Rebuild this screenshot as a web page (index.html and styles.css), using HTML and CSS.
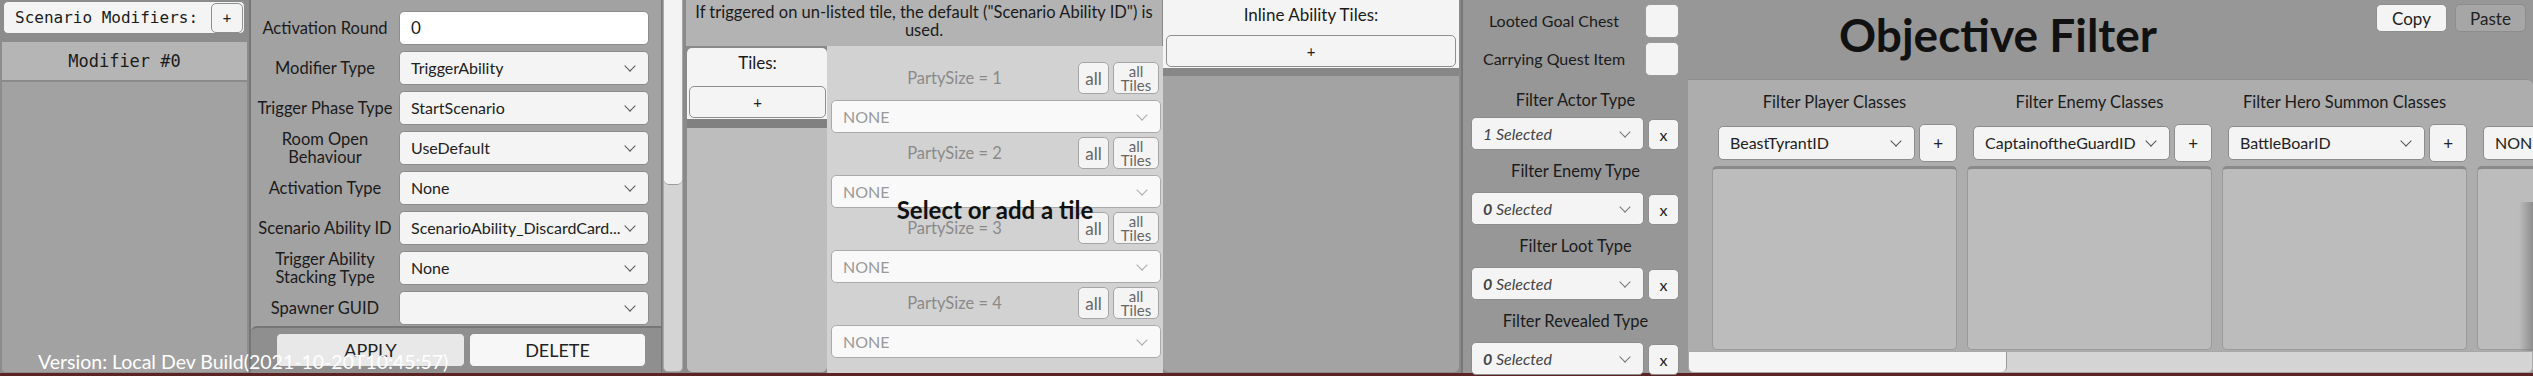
FILE: index.html
```html
<!DOCTYPE html>
<html lang="en">
<head>
  <meta charset="UTF-8">
  <title>Scenario Modifier Editor</title>
  <link rel="stylesheet" href="styles.css">
</head>
<body>

  <div class="editor">

    <aside class="modifiers">
      <div class="mod-head">
        <span>Scenario Modifiers:</span>
        <button class="btn mod-add">+</button>
      </div>
      <div class="mod-item">Modifier #0</div>
      <div class="mod-list"></div>
    </aside>

    <section class="form-panel">
      <div class="form-rows">
        <span class="form-label">Activation Round</span>
        <div class="field-input">0</div>

        <span class="form-label">Modifier Type</span>
        <div class="select">TriggerAbility</div>

        <span class="form-label">Trigger Phase Type</span>
        <div class="select">StartScenario</div>

        <span class="form-label">Room Open<br>Behaviour</span>
        <div class="select">UseDefault</div>

        <span class="form-label">Activation Type</span>
        <div class="select">None</div>

        <span class="form-label">Scenario Ability ID</span>
        <div class="select">ScenarioAbility_DiscardCard...</div>

        <span class="form-label">Trigger Ability<br>Stacking Type</span>
        <div class="select">None</div>

        <span class="form-label">Spawner GUID</span>
        <div class="select"></div>
      </div>
      <div class="form-actions">
        <button class="btn btn-apply">APPLY</button>
        <button class="btn btn-delete">DELETE</button>
      </div>
    </section>

    <div class="vscroll">
      <div class="vscroll-track">
        <div class="vscroll-thumb"></div>
      </div>
    </div>

    <section class="tile-panel">
      <p class="tile-note">If triggered on un-listed tile, the default ("Scenario Ability ID") is<br>used.</p>
      <div class="tile-body">
        <div class="tile-list">
          <div class="tile-list-head">
            <div class="tile-list-title">Tiles:</div>
            <button class="btn tile-add">+</button>
          </div>
          <div class="tile-list-items"></div>
        </div>

        <div class="tile-sizes">
          <div class="size-group">
            <div class="size-head">
              <span class="size-label">PartySize = 1</span>
              <button class="btn btn-all">all</button>
              <button class="btn btn-all-tiles">all<br>Tiles</button>
            </div>
            <div class="select select-none">NONE</div>
          </div>
          <div class="size-group">
            <div class="size-head">
              <span class="size-label">PartySize = 2</span>
              <button class="btn btn-all">all</button>
              <button class="btn btn-all-tiles">all<br>Tiles</button>
            </div>
            <div class="select select-none">NONE</div>
          </div>
          <div class="size-group">
            <div class="size-head">
              <span class="size-label">PartySize = 3</span>
              <button class="btn btn-all">all</button>
              <button class="btn btn-all-tiles">all<br>Tiles</button>
            </div>
            <div class="select select-none">NONE</div>
          </div>
          <div class="size-group">
            <div class="size-head">
              <span class="size-label">PartySize = 4</span>
              <button class="btn btn-all">all</button>
              <button class="btn btn-all-tiles">all<br>Tiles</button>
            </div>
            <div class="select select-none">NONE</div>
          </div>

          <div class="tile-empty">Select or add a tile</div>
        </div>
      </div>
    </section>

    <section class="inline-panel">
      <div class="inline-head">
        <div class="inline-title">Inline Ability Tiles:</div>
        <button class="btn inline-add">+</button>
      </div>
      <div class="inline-list"></div>
    </section>

    <section class="filter-panel">
      <div class="check-row">
        <span class="check-label">Looted Goal Chest</span>
        <span class="checkbox"></span>
      </div>
      <div class="check-row">
        <span class="check-label">Carrying Quest Item</span>
        <span class="checkbox"></span>
      </div>

      <div class="filter-label">Filter Actor Type</div>
      <div class="filter-row">
        <div class="select select-multi">1 Selected</div>
        <button class="btn btn-clear">x</button>
      </div>

      <div class="filter-label">Filter Enemy Type</div>
      <div class="filter-row">
        <div class="select select-multi"><b>0</b> Selected</div>
        <button class="btn btn-clear">x</button>
      </div>

      <div class="filter-label">Filter Loot Type</div>
      <div class="filter-row">
        <div class="select select-multi"><b>0</b> Selected</div>
        <button class="btn btn-clear">x</button>
      </div>

      <div class="filter-label">Filter Revealed Type</div>
      <div class="filter-row">
        <div class="select select-multi"><b>0</b> Selected</div>
        <button class="btn btn-clear">x</button>
      </div>
    </section>

    <section class="objective">
      <div class="obj-head">
        <h1 class="obj-title">Objective Filter</h1>
        <div class="obj-actions">
          <button class="btn btn-copy">Copy</button>
          <button class="btn btn-paste">Paste</button>
        </div>
      </div>

      <div class="obj-body">
        <div class="class-col">
          <div class="class-title">Filter Player Classes</div>
          <div class="class-pick">
            <div class="select">BeastTyrantID</div>
            <button class="btn btn-plus">+</button>
          </div>
          <div class="class-list"></div>
        </div>
        <div class="class-col">
          <div class="class-title">Filter Enemy Classes</div>
          <div class="class-pick">
            <div class="select">CaptainoftheGuardID</div>
            <button class="btn btn-plus">+</button>
          </div>
          <div class="class-list"></div>
        </div>
        <div class="class-col">
          <div class="class-title">Filter Hero Summon Classes</div>
          <div class="class-pick">
            <div class="select">BattleBoarID</div>
            <button class="btn btn-plus">+</button>
          </div>
          <div class="class-list"></div>
        </div>
        <div class="class-col">
          <div class="class-title">&nbsp;</div>
          <div class="class-pick">
            <div class="select">NONE</div>
            <button class="btn btn-plus">+</button>
          </div>
          <div class="class-list"></div>
        </div>
      </div>

      <div class="hscroll">
        <div class="hscroll-thumb"></div>
      </div>
    </section>

    <div class="version">Version: Local Dev Build(2021-10-20T10:45:57)</div>
  </div>

</body>
</html>
```

FILE: styles.css
```css
* {
  box-sizing: border-box;
}
body {
  margin: 0;
  width: 2533px;
  height: 376px;
  overflow: hidden;
  background: #5a2424;
  font-family: Lato, "Open Sans", sans-serif;
  font-size: 16px;
  color: #1b1b1b;
}
.editor {
  position: relative;
  display: flex;
  height: 373px;
  background: #8a8a8a;
}
.btn {
  padding: 0;
  font-family: inherit;
  font-size: 16px;
  color: #222;
  background: #f4f4f4;
  border: 1px solid #8e8e8e;
  border-radius: 5px;
  cursor: pointer;
}

/* dropdowns */
.select {
  position: relative;
  height: 34px;
  padding: 0 30px 0 11px;
  line-height: 32px;
  white-space: nowrap;
  overflow: hidden;
  color: #222;
  background: #f4f4f4;
  border: 1px solid #8c8c8c;
  border-radius: 5px;
}
.select::after {
  content: "";
  position: absolute;
  right: 14px;
  top: 10px;
  width: 7px;
  height: 7px;
  border-right: 1.5px solid #555;
  border-bottom: 1.5px solid #555;
  transform: rotate(45deg);
}

/* scenario modifiers list */
.modifiers {
  width: 251px;
  display: flex;
  flex-direction: column;
  background: #8c8c8c;
  border-right: 2px solid #777;
  font-family: "DejaVu Sans Mono", monospace;
}
.mod-head {
  height: 33px;
  margin: 1px 4px 0 3px;
  padding: 0 1px 0 11px;
  display: flex;
  align-items: center;
  justify-content: space-between;
  font-size: 16px;
  background: #f4f4f4;
  border: 1px solid #8a8a8a;
  border-radius: 5px;
}
.mod-add {
  width: 32px;
  height: 30px;
  font-family: inherit;
  font-size: 14px;
}
.mod-item {
  height: 40px;
  margin: 8px 2px 0;
  line-height: 38px;
  text-align: center;
  font-size: 17px;
  background: #b5b5b5;
  border-bottom: 2px solid #8a8a8a;
}
.mod-list {
  flex: 1;
  margin: 0 2px 1px;
  background: #a2a2a2;
  border-radius: 0 0 4px 4px;
}

/* modifier form */
.form-panel {
  width: 410px;
  display: flex;
  flex-direction: column;
  background: #a2a2a2;
}
.form-rows {
  flex: 1;
  display: grid;
  grid-template-columns: 148px 250px;
  grid-auto-rows: 34px;
  row-gap: 6px;
  align-items: center;
  padding-top: 11px;
}
.form-label {
  text-align: center;
  line-height: 18px;
  font-size: 16.5px;
}
.field-input {
  height: 34px;
  padding-left: 11px;
  line-height: 32px;
  font-size: 17px;
  background: #fff;
  border: 1px solid #8c8c8c;
  border-radius: 5px;
}
.form-actions {
  height: 47px;
  display: flex;
  gap: 4px;
  padding: 5px 15px 0 25px;
  background: #8f8f8f;
  border-top: 2px solid #767676;
  border-radius: 6px 0 0 0;
}
.btn-apply,
.btn-delete {
  height: 34px;
  font-size: 18px;
}
.btn-apply {
  width: 189px;
  background: #e8e8e8;
}
.btn-delete {
  width: 177px;
  background: #f7f7f7;
}

.vscroll {
  width: 25px;
  padding: 0 3px 1px 1px;
  border-left: 1px solid #777;
}
.vscroll-track {
  height: 100%;
  background: #d4d4d4;
  border: 1px solid #a8a8a8;
  border-top: none;
  border-radius: 0 0 5px 5px;
}
.vscroll-thumb {
  height: 185px;
  background: #f3f3f3;
  border-bottom: 1px solid #9a9a9a;
  border-radius: 0 0 5px 5px;
}

/* tile overrides */
.tile-panel {
  width: 477px;
  display: flex;
  flex-direction: column;
}
.tile-note {
  height: 46px;
  margin: 0 1px 0 0;
  padding-top: 3px;
  text-align: center;
  line-height: 18px;
  font-size: 16.5px;
  background: #b3b3b3;
}
.tile-body {
  flex: 1;
  display: flex;
}
.tile-list {
  width: 140px;
  display: flex;
  flex-direction: column;
  margin: 2px 0 1px 1px;
}
.tile-list-head {
  padding: 0 1px 1px 2px;
  background: #f4f4f4;
  border-radius: 5px 5px 0 0;
}
.tile-list-title {
  height: 38px;
  line-height: 30px;
  text-align: center;
  font-size: 17px;
}
.tile-add,
.inline-add {
  display: block;
  width: 100%;
  height: 32px;
  font-size: 15px;
}
.tile-list-items {
  flex: 1;
  background: #bdbdbd;
  border-top: 9px solid #808080;
  border-radius: 0 0 5px 5px;
}
.tile-sizes {
  position: relative;
  flex: 1;
  padding: 16px 2px 0 4px;
  background: #d2d2d2;
}
.size-group {
  margin-bottom: 4px;
}
.size-head {
  display: flex;
  align-items: center;
  height: 32px;
  margin-bottom: 6px;
  padding-right: 2px;
}
.size-label {
  flex: 1;
  text-align: center;
  font-size: 16.5px;
  color: #8a8a8a;
}
.btn-all,
.btn-all-tiles {
  height: 32px;
  color: #666;
  border-color: #a5a5a5;
}
.btn-all {
  width: 31px;
  font-size: 17px;
}
.btn-all-tiles {
  width: 46px;
  margin-left: 4px;
  font-size: 15px;
  line-height: 14px;
}
.select-none {
  height: 33px;
  color: #9a9a9a;
  background: #f9f9f9;
  border-color: #ababab;
}
.select-none::after {
  border-color: #aaa;
}
.tile-empty {
  position: absolute;
  inset: 0;
  display: flex;
  align-items: center;
  justify-content: center;
  font-size: 24px;
  font-weight: bold;
  color: #111;
  pointer-events: none;
}

/* inline ability tiles */
.inline-panel {
  width: 298px;
  display: flex;
  flex-direction: column;
  padding: 0 2px 1px 0;
}
.inline-head {
  padding: 0 3px 1px;
  background: #f4f4f4;
}
.inline-title {
  height: 35px;
  line-height: 30px;
  text-align: center;
  font-size: 17px;
}
.inline-list {
  flex: 1;
  background: #a3a3a3;
  border-top: 8px solid #878787;
  border-radius: 0 0 5px 5px;
}

/* objective filter: left column */
.filter-panel {
  width: 227px;
  padding-top: 4px;
  background: #979797;
  border-left: 2px solid #777;
}
.check-row {
  display: flex;
  align-items: center;
  height: 33px;
  margin-bottom: 5px;
  padding-right: 9px;
}
.check-label {
  flex: 1;
  text-align: center;
}
.checkbox {
  width: 34px;
  height: 34px;
  background: #f4f4f4;
  border: 1px solid #9a9a9a;
  border-radius: 5px;
}
.filter-label {
  height: 42px;
  line-height: 42px;
  text-align: center;
  font-size: 16.5px;
}
.check-row + .filter-label {
  height: 37px;
  line-height: 40px;
}
.filter-row {
  display: flex;
  gap: 4px;
  height: 33px;
  padding: 0 9px 0 8px;
}
.select-multi {
  width: 173px;
  height: 33px;
  font-style: italic;
  color: #444;
}
.select-multi::after {
  border-color: #777;
}
.btn-clear {
  width: 31px;
  height: 31px;
  margin-top: 2px;
  font-size: 16px;
}

/* objective filter: classes */
.objective {
  width: 845px;
  display: flex;
  flex-direction: column;
  overflow: hidden;
  background: #979797;
}
.obj-head {
  height: 79px;
  display: flex;
  align-items: flex-start;
  padding: 4px 7px 0 0;
}
.obj-title {
  width: 620px;
  margin: 0;
  text-align: center;
  font-size: 46px;
  line-height: 62px;
  color: #111;
}
.obj-actions {
  display: flex;
  gap: 8px;
  margin-left: auto;
}
.btn-copy,
.btn-paste {
  width: 71px;
  height: 28px;
  font-size: 17px;
}
.btn-paste {
  background: #a6a6a6;
  border-color: #8d8d8d;
}
.obj-body {
  position: relative;
  height: 272px;
  display: grid;
  grid-template-columns: repeat(4, 245px);
  column-gap: 10px;
  padding-left: 24px;
  overflow: hidden;
  background: #adadad;
  border-top: 1px solid #8e8e8e;
  border-radius: 0 6px 0 0;
}
.obj-body::after {
  content: "";
  position: absolute;
  top: 122px;
  right: 0;
  bottom: 0;
  width: 14px;
  background: linear-gradient(to right, rgba(140,140,140,0), rgba(130,130,130,0.8));
}
.class-col {
  display: flex;
  flex-direction: column;
}
.class-title {
  height: 44px;
  line-height: 44px;
  text-align: center;
  white-space: nowrap;
  font-size: 16.5px;
}
.class-pick {
  display: flex;
  align-items: center;
  gap: 4px;
  height: 38px;
  padding-left: 6px;
}
.class-pick .select {
  width: 198px;
}
.btn-plus {
  width: 38px;
  height: 38px;
  font-size: 17px;
}
.class-list {
  height: 184px;
  margin-top: 4px;
  background: #bcbcbc;
  border: 1px solid #9a9a9a;
  border-top: 3px solid #8a8a8a;
  border-radius: 5px;
}
.hscroll {
  height: 22px;
  background: #d4d4d4;
  border: 1px solid #a8a8a8;
  border-radius: 0 0 5px 5px;
}
.hscroll-thumb {
  width: 318px;
  height: 100%;
  background: #f4f4f4;
  border-right: 1px solid #9a9a9a;
  border-radius: 0 0 5px 5px;
}

.version {
  position: absolute;
  left: 38px;
  bottom: 0;
  font-size: 19.5px;
  line-height: 22px;
  color: #fff;
  white-space: nowrap;
  pointer-events: none;
}
```
